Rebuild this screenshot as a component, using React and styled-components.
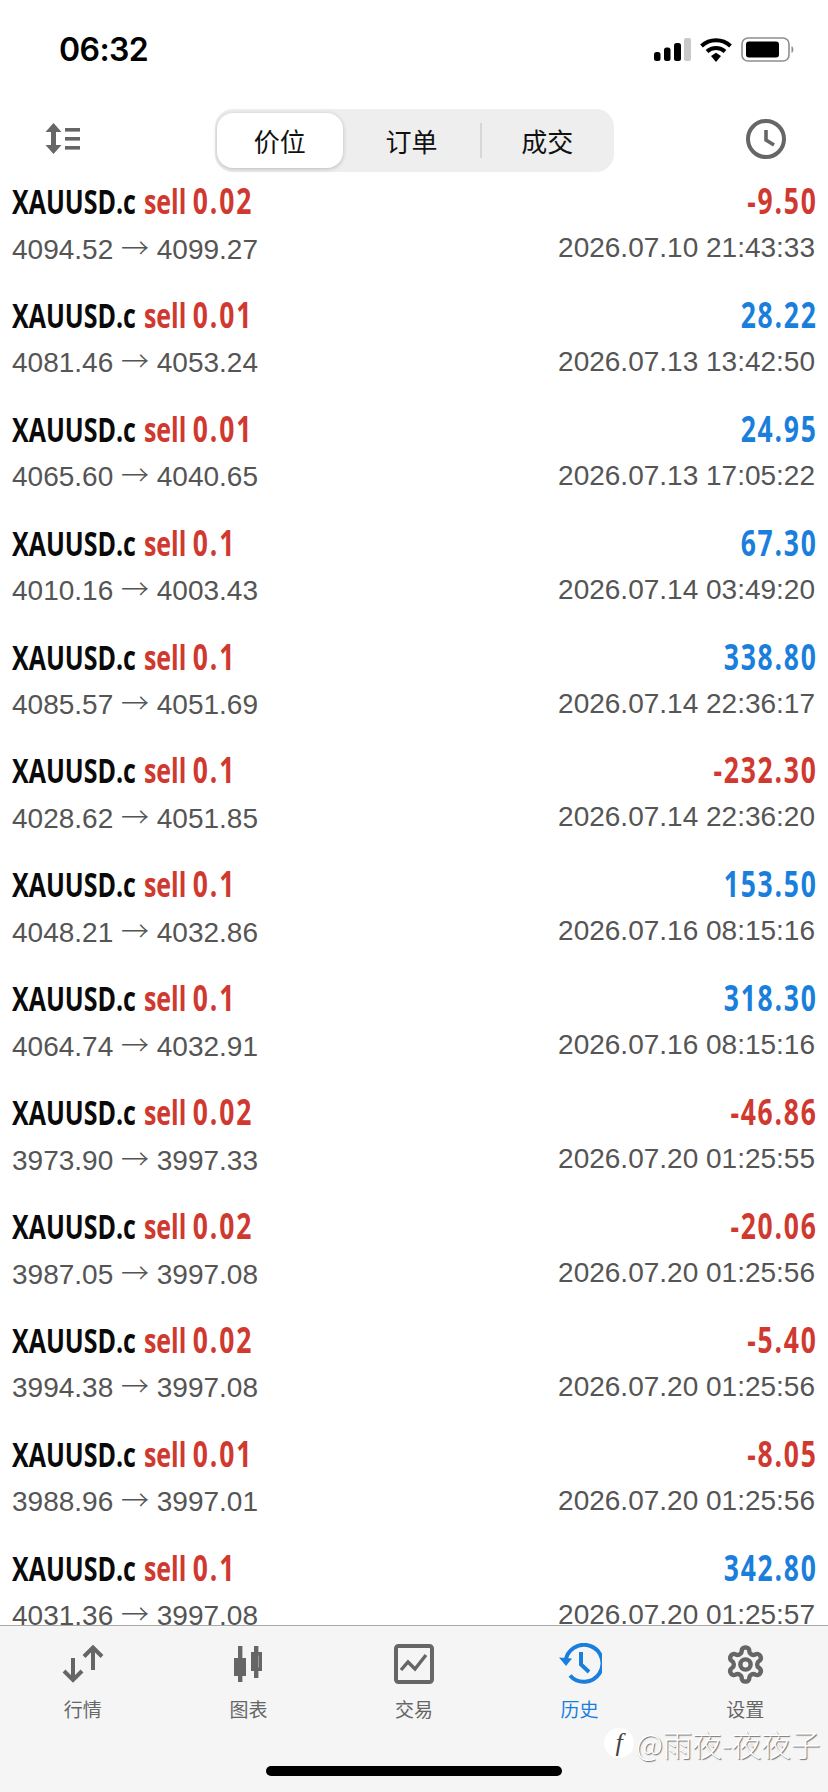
import React from "react";
import styled, { createGlobalStyle } from "styled-components";

const Global = createGlobalStyle`
  html, body { margin: 0; padding: 0; background: #fff; }
  #root { width: 828px; height: 1792px; }
`;
const Page = styled.div`
  position: relative; width: 828px; height: 1792px; display: flex; flex-direction: column;
  overflow: hidden; background: #fff; font-family: "Liberation Sans", "Noto Sans CJK SC", sans-serif;
`;
const StatusBar = styled.div`
  height: 100px; flex: none; display: flex; align-items: center; justify-content: space-between;
  padding: 0 33px 0 59px; box-sizing: border-box;
`;
const Time = styled.div`
  font: 600 32px/1 Inter, sans-serif; color: #000; letter-spacing: -0.6px;
`;
const StatusIcons = styled.div`display: flex; align-items: center; gap: 9px;`;
const Header = styled.div`
  height: 77px; flex: none; display: grid; grid-template-columns: 170px 399px 1fr; align-items: start;
  padding: 9px 42px 0 45px; box-sizing: border-box;
`;
const HeaderIcon = styled.div`
  display: flex; height: 60px; align-items: center; justify-content: ${p => (p.$end ? "flex-end" : "flex-start")};
`;
const Segments = styled.div`
  height: 63px; background: #eeeeef; border-radius: 18px; display: flex; align-items: center;
  padding: 0 2px; box-sizing: border-box;
`;
const Segment = styled.div`
  flex: ${p => p.$w} 0 0; height: 55px; display: flex; align-items: center; justify-content: center;
  font: 400 26px/1 "Noto Sans CJK SC", sans-serif; color: #111;
  border-radius: 16px;
  background: ${p => (p.$active ? "#fff" : "transparent")};
  box-shadow: ${p => (p.$active ? "0 1px 4px rgba(0,0,0,.22)" : "none")};
`;
const Divider = styled.div`width: 2px; height: 35px; background: #d6d6d8; flex: none;`;
const List = styled.div`flex: 1; min-height: 0; overflow: hidden;`;
const Row = styled.div`
  height: 113.9px; box-sizing: border-box; padding: 0 13px 0 12px; display: grid;
  grid-template-rows: 48px 46px; align-content: start;
`;
const Line = styled.div`display: flex; justify-content: space-between; align-items: center; white-space: nowrap;`;
const Title = styled.div`
  display: inline-block; transform: scaleX(0.735); transform-origin: left center;
  font: 700 34px/1 "Open Sans", sans-serif; color: #0a0a0a;
`;
const Side = styled.span`color: #d0392f; margin-left: 2px;`;
const Lots = styled.span`font-size: 36px; letter-spacing: 2.6px;`;
const Amount = styled.div`
  display: inline-block; transform: scaleX(0.735); transform-origin: right center;
  font: 700 36px/1 "Open Sans", sans-serif; letter-spacing: 2.4px; margin-right: -3px;
  color: ${p => (p.$neg ? "#d0392f" : "#1a7fdc")};
`;
const Sub = styled.div`font: 400 28px/1 "Liberation Sans", sans-serif; color: #555;`;
const Arrow = styled.span`font-family: "Noto Sans CJK SC", sans-serif; font-weight: 300;`;
const TabBar = styled.div`
  flex: none; height: 167px; box-sizing: border-box; background: #f5f5f6; border-top: 1px solid #a9a9a9;
  display: grid; grid-template-columns: repeat(5, 1fr); padding-top: 16px; align-items: start;
`;
const Tab = styled.div`
  display: flex; flex-direction: column; align-items: center; gap: 10px;
  color: ${p => (p.$active ? "#1a7fdc" : "#666")};
  font: 400 19px/26px "Noto Sans CJK SC", sans-serif;
`;
const TabIcon = styled.div`height: 44px; display: flex; align-items: center; justify-content: center;`;
const HomeBar = styled.div`
  position: absolute; left: 266px; top: 1766px; width: 296px; height: 10px; background: #000; border-radius: 5px;
`;
const Watermark = styled.div`
  position: absolute; left: 604px; top: 1724px; display: flex; align-items: center; gap: 2px;
  font: 300 29.5px/38px "Noto Sans CJK SC", sans-serif; color: #fff;
  text-shadow: 1px 1px 1px rgba(0,0,0,.55);
`;
const Logo = styled.span`
  width: 30px; height: 30px; border-radius: 50%; background: #fff; display: flex; align-items: center; justify-content: center;
  font: italic 400 26px/30px "Liberation Serif", serif; color: #444; text-shadow: none;
`;

const rows = [
  ["0.02", "-9.50", "4094.52", "4099.27", "2026.07.10 21:43:33"],
  ["0.01", "28.22", "4081.46", "4053.24", "2026.07.13 13:42:50"],
  ["0.01", "24.95", "4065.60", "4040.65", "2026.07.13 17:05:22"],
  ["0.1", "67.30", "4010.16", "4003.43", "2026.07.14 03:49:20"],
  ["0.1", "338.80", "4085.57", "4051.69", "2026.07.14 22:36:17"],
  ["0.1", "-232.30", "4028.62", "4051.85", "2026.07.14 22:36:20"],
  ["0.1", "153.50", "4048.21", "4032.86", "2026.07.16 08:15:16"],
  ["0.1", "318.30", "4064.74", "4032.91", "2026.07.16 08:15:16"],
  ["0.02", "-46.86", "3973.90", "3997.33", "2026.07.20 01:25:55"],
  ["0.02", "-20.06", "3987.05", "3997.08", "2026.07.20 01:25:56"],
  ["0.02", "-5.40", "3994.38", "3997.08", "2026.07.20 01:25:56"],
  ["0.01", "-8.05", "3988.96", "3997.01", "2026.07.20 01:25:56"],
  ["0.1", "342.80", "4031.36", "3997.08", "2026.07.20 01:25:57"],
];

const Signal = () => (
  <svg width="37" height="24" viewBox="0 0 37 24">
    <rect x="0" y="14" width="6.5" height="9" rx="2.5" fill="#000" />
    <rect x="10" y="9.5" width="6.5" height="13.5" rx="2.5" fill="#000" />
    <rect x="20" y="5" width="7" height="18" rx="2.5" fill="#000" />
    <rect x="30" y="0" width="7" height="23" rx="2" fill="#c9c9c9" />
  </svg>
);
const Wifi = () => (
  <svg width="32" height="24" viewBox="0 0 32 24">
    <path d="M1.5 8 A21 21 0 0 1 30.5 8" fill="none" stroke="#000" strokeWidth="4" />
    <path d="M7 13.5 A13.5 13.5 0 0 1 25 13.5" fill="none" stroke="#000" strokeWidth="4" />
    <path d="M11 18 L16 14.7 L21 18 L16 24 Z" fill="#000" />
  </svg>
);
const Battery = () => (
  <svg width="54" height="26" viewBox="0 0 54 26">
    <rect x="1" y="1" width="47" height="23" rx="6" fill="none" stroke="#8e8e8e" strokeWidth="1.6" />
    <rect x="5" y="4.5" width="33" height="16" rx="3" fill="#000" />
    <path d="M50.5 9 C53 10 53 15 50.5 16 Z" fill="#8e8e8e" />
  </svg>
);
const SortIcon = () => (
  <svg width="36" height="32" viewBox="0 0 36 32" fill="#666">
    <path d="M8.5 0 L16.5 9 H11 V22 H16.5 L8.5 31 L0.5 22 H6 V9 H0.5 Z" />
    <rect x="20" y="5" width="15" height="3.6" /><rect x="20" y="14" width="15" height="3.6" /><rect x="20" y="23" width="15" height="3.6" />
  </svg>
);
const Clock = () => (
  <svg width="40" height="40" viewBox="0 0 40 40" fill="none" stroke="#666" strokeWidth="4">
    <circle cx="20" cy="20" r="18" />
    <path d="M20 11 V21 L28 26" strokeWidth="3.6" />
  </svg>
);
const QuotesIcon = () => (
  <svg width="42" height="38" viewBox="0 0 42 38" fill="none" stroke="#666" strokeWidth="4">
    <path d="M11 13 V35 M2 26 L11 35 L20 26" />
    <path d="M31 25 V2.5 M22 11.5 L31 2.5 L40 11.5" />
  </svg>
);
const ChartIcon = () => (
  <svg width="29" height="36" viewBox="0 0 29 36" fill="#666">
    <rect x="4" y="0" width="4.4" height="36" />
    <rect x="0" y="12" width="12" height="18" />
    <rect x="20" y="0" width="4.4" height="32" />
    <rect x="18.7" y="7.7" width="7.6" height="15.6" fill="none" stroke="#666" strokeWidth="3.4" />
  </svg>
);
const TradeIcon = () => (
  <svg width="40" height="40" viewBox="0 0 40 40" fill="none" stroke="#666">
    <rect x="2" y="2" width="36" height="36" rx="2.5" strokeWidth="4" />
    <path d="M7 26 L14 18 L21 25 L32 11" strokeWidth="3.4" />
  </svg>
);
const HistoryIcon = () => (
  <svg width="44" height="42" viewBox="0 0 44 42" fill="none" stroke="#1a7fdc" strokeWidth="4">
    <path d="M7.5 19 A18.5 18.5 0 1 1 12 32.5" />
    <path d="M1 14.5 L8 23 L14 15.5 Z" fill="#1a7fdc" stroke="none" />
    <path d="M23 9 V21.5 L31 29" />
  </svg>
);
const GearIcon = () => (
  <svg width="41" height="43" viewBox="0 0 24 24" fill="none" stroke="#666" strokeWidth="2.6" strokeLinejoin="round">
    <path d="M12.22 2h-.44a2 2 0 0 0-2 2v.18a2 2 0 0 1-1 1.73l-.43.25a2 2 0 0 1-2 0l-.15-.08a2 2 0 0 0-2.73.73l-.22.38a2 2 0 0 0 .73 2.73l.15.1a2 2 0 0 1 1 1.72v.51a2 2 0 0 1-1 1.74l-.15.09a2 2 0 0 0-.73 2.73l.22.38a2 2 0 0 0 2.73.73l.15-.08a2 2 0 0 1 2 0l.43.25a2 2 0 0 1 1 1.73V20a2 2 0 0 0 2 2h.44a2 2 0 0 0 2-2v-.18a2 2 0 0 1 1-1.73l.43-.25a2 2 0 0 1 2 0l.15.08a2 2 0 0 0 2.73-.73l.22-.39a2 2 0 0 0-.73-2.73l-.15-.08a2 2 0 0 1-1-1.74v-.5a2 2 0 0 1 1-1.74l.15-.09a2 2 0 0 0 .73-2.73l-.22-.38a2 2 0 0 0-2.73-.73l-.15.08a2 2 0 0 1-2 0l-.43-.25a2 2 0 0 1-1-1.73V4a2 2 0 0 0-2-2z" />
    <circle cx="12" cy="12" r="3" />
  </svg>
);

export default function App() {
  return (
    <Page>
      <Global />
      <StatusBar>
        <Time>06:32</Time>
        <StatusIcons><Signal /><Wifi /><Battery /></StatusIcons>
      </StatusBar>
      <Header>
        <HeaderIcon><SortIcon /></HeaderIcon>
        <Segments>
          <Segment $w={126} $active>价位</Segment>
          <Segment $w={138}>订单</Segment>
          <Divider />
          <Segment $w={130}>成交</Segment>
        </Segments>
        <HeaderIcon $end><Clock /></HeaderIcon>
      </Header>
      <List>
        {rows.map((r, i) => {
          const neg = r[1].startsWith("-");
          return (
            <Row key={i}>
              <Line>
                <Title>XAUUSD.c <Side>sell <Lots>{r[0]}</Lots></Side></Title>
                <Amount $neg={neg}>{r[1]}</Amount>
              </Line>
              <Line>
                <Sub>{r[2]} <Arrow>→</Arrow> {r[3]}</Sub>
                <Sub>{r[4]}</Sub>
              </Line>
            </Row>
          );
        })}
      </List>
      <TabBar>
        <Tab><TabIcon><QuotesIcon /></TabIcon>行情</Tab>
        <Tab><TabIcon><ChartIcon /></TabIcon>图表</Tab>
        <Tab><TabIcon><TradeIcon /></TabIcon>交易</Tab>
        <Tab $active><TabIcon><HistoryIcon /></TabIcon>历史</Tab>
        <Tab><TabIcon><GearIcon /></TabIcon>设置</Tab>
      </TabBar>
      <Watermark><Logo>f</Logo>@雨夜-夜夜子</Watermark>
      <HomeBar />
    </Page>
  );
}
